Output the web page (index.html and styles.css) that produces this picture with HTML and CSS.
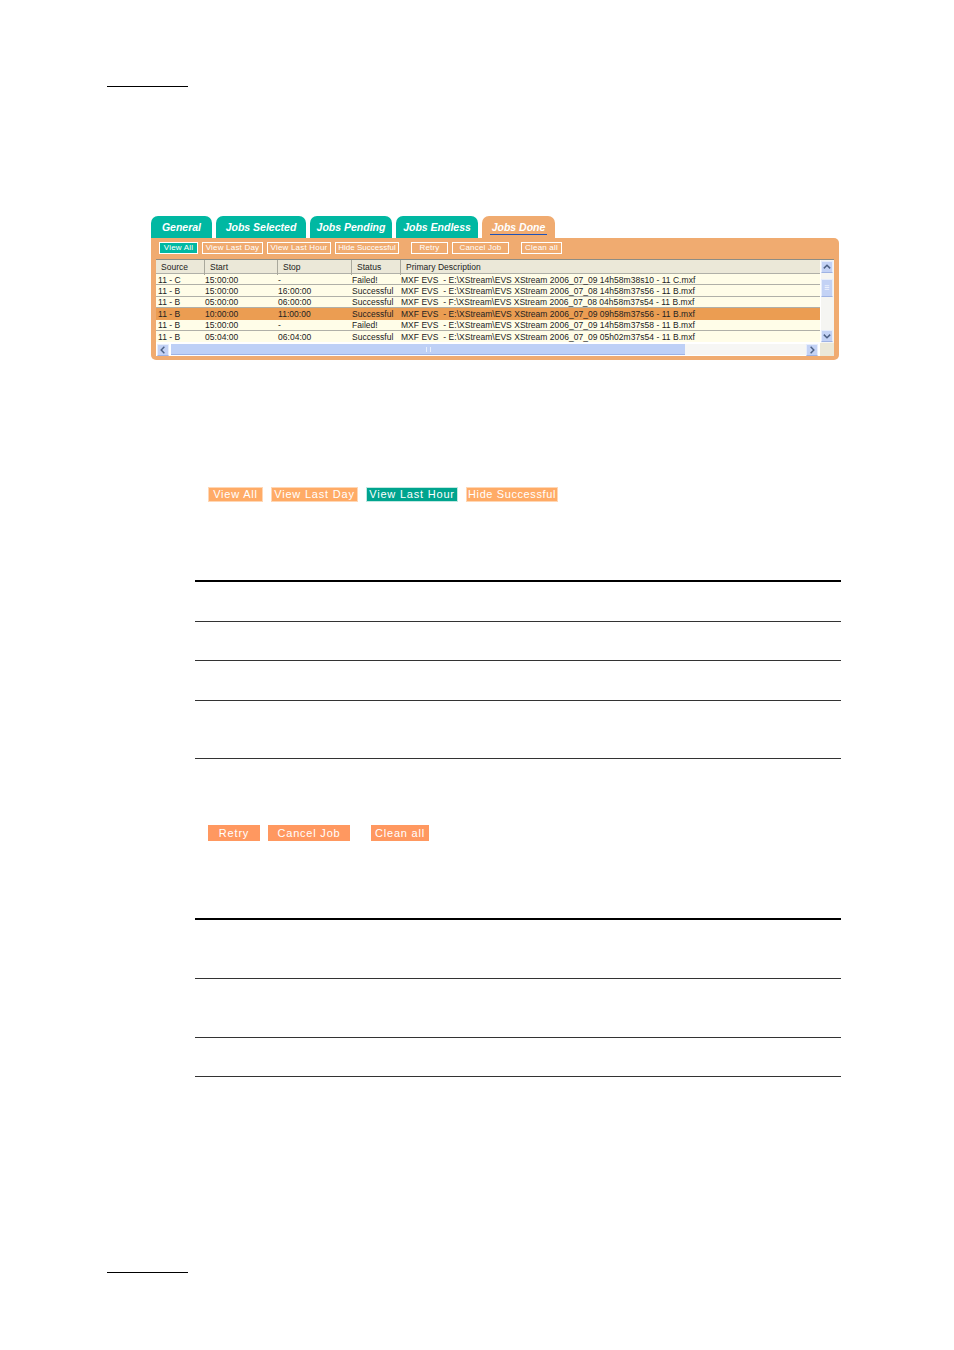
FILE: index.html
```html
<!DOCTYPE html>
<html lang="en">
<head>
<meta charset="utf-8">
<title>Jobs Done</title>
<link rel="stylesheet" href="styles.css">
</head>
<body>
<div class="page">
  <div class="short-rule head-rule"></div>

  <section class="widget">
    <nav class="tabs">
      <span class="tab t1">General</span>
      <span class="tab t2">Jobs Selected</span>
      <span class="tab t3">Jobs Pending</span>
      <span class="tab t4">Jobs Endless</span>
      <span class="tab t5 active"><span class="underlined">Jobs Done</span></span>
    </nav>
    <div class="panel">
      <div class="actions">
        <span class="act a1 on">View All</span>
        <span class="act a2">View Last Day</span>
        <span class="act a3">View Last Hour</span>
        <span class="act a4">Hide Successful</span>
        <span class="act a5">Retry</span>
        <span class="act a6">Cancel Job</span>
        <span class="act a7">Clean all</span>
      </div>
      <div class="grid-box">
        <div class="grid-main">
          <div class="row head"><span>Source</span><span>Start</span><span>Stop</span><span>Status</span><span>Primary Description</span></div>
          <div class="row"><span>11 - C</span><span>15:00:00</span><span>-</span><span>Failed!</span><span>MXF EVS  - E:\XStream\EVS XStream 2006_07_09 14h58m38s10 - 11 C.mxf</span></div>
          <div class="row"><span>11 - B</span><span>15:00:00</span><span>16:00:00</span><span>Successful</span><span>MXF EVS  - E:\XStream\EVS XStream 2006_07_08 14h58m37s56 - 11 B.mxf</span></div>
          <div class="row"><span>11 - B</span><span>05:00:00</span><span>06:00:00</span><span>Successful</span><span>MXF EVS  - F:\XStream\EVS XStream 2006_07_08 04h58m37s54 - 11 B.mxf</span></div>
          <div class="row sel"><span>11 - B</span><span>10:00:00</span><span>11:00:00</span><span>Successful</span><span>MXF EVS  - E:\XStream\EVS XStream 2006_07_09 09h58m37s56 - 11 B.mxf</span></div>
          <div class="row"><span>11 - B</span><span>15:00:00</span><span>-</span><span>Failed!</span><span>MXF EVS  - E:\XStream\EVS XStream 2006_07_09 14h58m37s58 - 11 B.mxf</span></div>
          <div class="row last"><span>11 - B</span><span>05:04:00</span><span>06:04:00</span><span>Successful</span><span>MXF EVS  - E:\XStream\EVS XStream 2006_07_09 05h02m37s54 - 11 B.mxf</span></div>
        </div>
        <div class="vbar">
          <span class="sb-btn"><svg viewBox="0 0 11 11"><path d="M2 7l3.500-3.500L9 7" /></svg></span>
          <span class="sb-thumb"><svg viewBox="0 0 11 11"><path d="M3 3h5M3 5h5M3 7h5" /></svg></span>
          <span class="sb-fill"></span>
          <span class="sb-btn"><svg viewBox="0 0 11 11"><path d="M2 4l3.500 3.500L9 4" /></svg></span>
        </div>
        <div class="hbar">
          <span class="sb-btn"><svg viewBox="0 0 11 11"><path d="M7 2L3.500 5.500 7 9" /></svg></span>
          <span class="h-thumb"><span class="grip"></span></span>
          <span class="h-rest"></span>
          <span class="sb-btn"><svg viewBox="0 0 11 11"><path d="M4 2l3.500 3.500L4 9" /></svg></span>
        </div>
        <div class="corner"></div>
      </div>
    </div>
  </section>

  <div class="btns btns-one">
    <span class="btn peach b1">View All</span>
    <span class="btn peach b2">View Last Day</span>
    <span class="btn teal b3">View Last Hour</span>
    <span class="btn peach b4">Hide Successful</span>
  </div>

  <div class="ruled ruled-one">
    <div class="r r41"></div>
    <div class="r r39"></div>
    <div class="r r40"></div>
    <div class="r r58"></div>
  </div>

  <div class="btns btns-two">
    <span class="btn coral c1">Retry</span>
    <span class="btn coral c2">Cancel Job</span>
    <span class="btn coral c3">Clean all</span>
  </div>

  <div class="ruled ruled-two">
    <div class="r r60"></div>
    <div class="r r59"></div>
    <div class="r r39"></div>
  </div>

  <div class="short-rule foot-rule"></div>
</div>
</body>
</html>
```

FILE: styles.css
```css
* { box-sizing: border-box; }
html, body { margin: 0; padding: 0; background: #fff; }
body { font-family: "Liberation Sans", Arial, sans-serif; }
.page { width: 954px; height: 1350px; overflow: hidden; padding-top: 86px; position: relative; }

.short-rule { width: 81px; height: 1px; background: #000; margin-left: 107px; }
.foot-rule { margin-top: 195px; }

.widget { width: 688px; margin: 129px 0 0 151px; }
.tabs { display: flex; gap: 4px; height: 22px; }
.tab {
  display: flex; align-items: center; justify-content: center; height: 22px;
  background: #00b8a2; color: #fff; border-radius: 7px 7px 0 0;
  font: italic bold 10.5px "Liberation Sans", Arial, sans-serif; padding-bottom: 1px;
}
.t1 { width: 61px; } .t2 { width: 90px; } .t3 { width: 82px; } .t4 { width: 82px; } .t5 { width: 73px; }
.tab.active { background: #f0ab70; }
.underlined { border-bottom: 1px solid #1d52b8; padding: 0 2px 1px; margin-top: 2px; }

.panel { height: 122px; background: #f0ab70; border-radius: 0 5px 5px 5px; padding: 4px 5px 0; }
.actions { display: flex; height: 12px; }
.act {
  height: 12px; border: 1px solid #fff; color: #fff; font-size: 8px; line-height: 10px;
  text-align: center; white-space: nowrap; letter-spacing: .2px; overflow: hidden;
}
.act.on { background: #00b8a2; }
.a1 { width: 39px; margin-left: 3px; }
.a2 { width: 61px; margin-left: 4px; }
.a3 { width: 64px; margin-left: 4px; }
.a4 { width: 64px; margin-left: 4px; letter-spacing: 0; }
.a5 { width: 37px; margin-left: 12px; }
.a6 { width: 57px; margin-left: 4px; }
.a7 { width: 41px; margin-left: 12px; }

.grid-box {
  margin-top: 5px; height: 96px; width: 678px; background: #fff;
  display: grid; grid-template-columns: 664px 14px; grid-template-rows: 83px 13px;
  border-top: 1px solid #8d8d85;
}
.grid-main { background: #fff; overflow: hidden; }
.row {
  display: grid; grid-template-columns: 47px 73px 74px 49px 1fr; height: 11.4px;
  background: #fffde8; border-bottom: 1px solid #b0b0a8;
  font-size: 8.5px; line-height: 11.4px; color: #222; white-space: pre; padding-left: 2px;
  letter-spacing: .03px;
}
.row span { position: relative; top: .6px; }
.row.head {
  grid-template-columns: 49px 73px 74px 49px 1fr;
  height: 14px; background: #ebe8d8; line-height: 15px; padding-left: 0;
}
.row.head span { top: 0; padding-left: 5px; box-shadow: -1px 0 0 #a9a89c; }
.row.sel { background: #eb9d52; border-bottom-color: #eb9d52; }
.row.last { border-bottom: 0; }

.vbar { background: #f5f5f2; display: flex; flex-direction: column; padding: 1px 1px 1px 0; border-left: 1px solid #fff; }
.sb-btn { display: block; width: 12px; height: 12px; background: #c3d2f5; border: 1px solid #e6edfb; border-bottom-color: #9fb3e4; flex: none; }
.sb-btn svg, .sb-thumb svg { display: block; width: 10px; height: 10px; }
.sb-btn path { fill: none; stroke: #4d6185; stroke-width: 1.6; }
.sb-thumb { display: block; width: 12px; height: 18px; margin-top: 6px; padding-top: 3px; background: #c3d2f5; border: 1px solid #e6edfb; border-bottom-color: #9fb3e4; flex: none; }
.sb-thumb path { fill: none; stroke: #eef3fd; stroke-width: 1; }
.sb-fill { flex: 1; }

.hbar { background: #fff; display: flex; align-items: center; padding: 0 2px 0 1px; }
.h-thumb {
  width: 514px; height: 11px; margin-left: 2px; background: #bed0f6; border-bottom: 1px solid #9fb3e4;
  display: flex; align-items: center; justify-content: center; flex: none;
}
.grip { width: 5px; height: 5px; border-left: 1px solid #e8effc; border-right: 1px solid #e8effc; }
.h-rest { flex: 1; background: #f6f6f4; height: 11px; }
.corner { background: #ebe8d8; }

.btns { display: flex; margin-left: 208px; }
.btn {
  display: block; text-align: center; color: #fff; white-space: nowrap;
  font-size: 11px; letter-spacing: .8px;
}
.btns-one { margin-top: 127px; height: 15px; }
.btns-two { margin-top: 66px; height: 16px; }
.btns-one .btn { height: 15px; }
.btns-two .btn { height: 16px; line-height: 16px; }
.peach { background: #ffab66; border: 1px solid #ffd7b5; line-height: 13px; }
.teal { background: #00a48e; border: 1px solid #bfe8e1; line-height: 13px; }
.coral { background: #ff9860; }
.b1 { width: 55px; }
.b2 { width: 87px; margin-left: 8px; }
.b3 { width: 92px; margin-left: 8px; }
.b4 { width: 92px; margin-left: 8px; letter-spacing: .6px; }
.c1 { width: 52px; }
.c2 { width: 82px; margin-left: 8px; }
.c3 { width: 58px; margin-left: 21px; }

.ruled { width: 646px; margin-left: 195px; border-top: 2px solid #000; }
.ruled-one { margin-top: 78px; }
.ruled-two { margin-top: 77px; }
.r { border-bottom: 1px solid #333; }
.r41 { height: 40px; }
.r39 { height: 39px; }
.r40 { height: 40px; }
.r58 { height: 58px; }
.r60 { height: 59px; }
.r59 { height: 59px; }
```
